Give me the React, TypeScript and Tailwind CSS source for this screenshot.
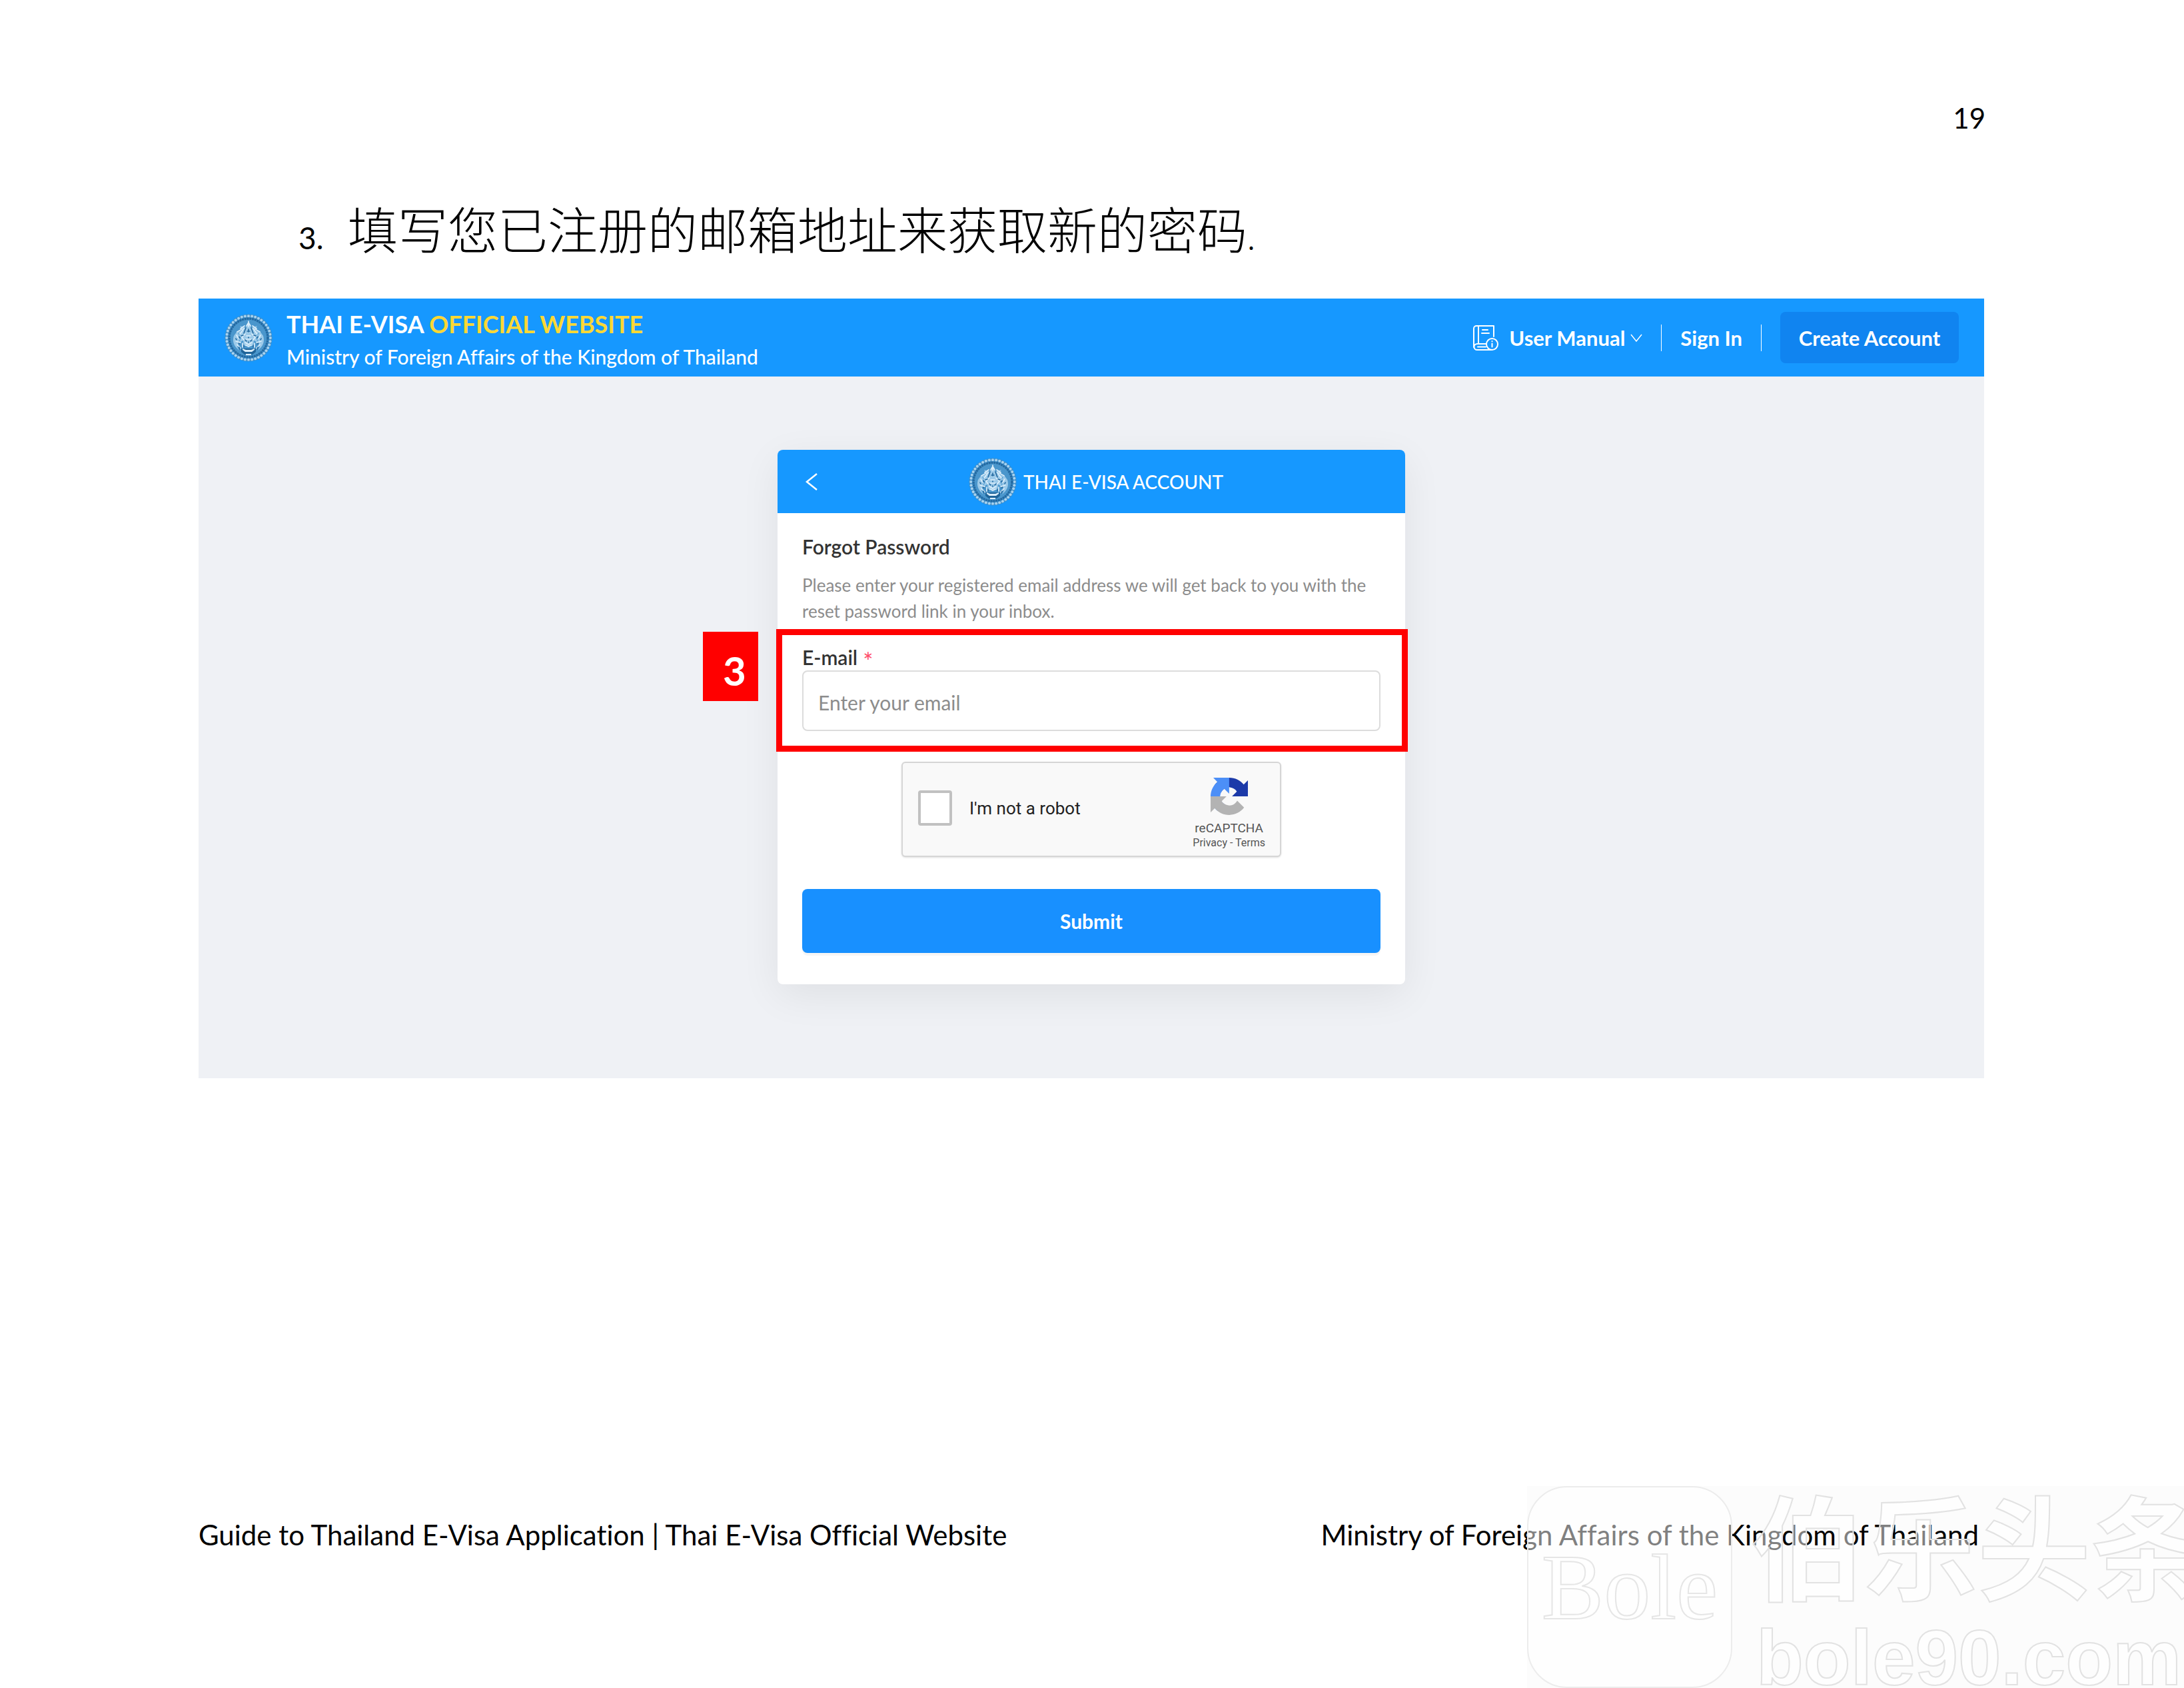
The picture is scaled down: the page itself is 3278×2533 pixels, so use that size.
import { useState } from 'react';

const beads = Array.from({ length: 40 }, (_, i) => (i * 2 * Math.PI) / 40);

// Round ministry seal, shared by the top bar and the card header
function Seal() {
  return (
    <svg viewBox="0 0 72 72" className="size-[72px] shrink-0" aria-hidden="true">
      <circle cx="36" cy="36" r="35.500" fill="#3f8fca" />
      {beads.map((a) => (
        <circle key={a} cx={36 + 32.8 * Math.cos(a)} cy={36 + 32.8 * Math.sin(a)} r="2" fill="#a9d2ee" />
      ))}
      <circle cx="36" cy="36" r="28.800" fill="#4a96cc" stroke="#2369a1" strokeWidth="3.200" strokeDasharray="3 .8" />
      <g fill="#9ccae9">
        <path d="M36 12l4 9 9-3-4 6 8 4-5 2 6 6-7-1 3 8-6-3-1 8h-14l-1-8-6 3 3-8-7 1 6-6-5-2 8-4-4-6 9 3z" />
        <path d="M14 33l5-7 3 6-3 5 4 4-4 8 3 6-5-5c-4-5-5-11-3-17zM58 33l-5-7-3 6 3 5-4 4 4 8-3 6 5-5c4-5 5-11 3-17z" />
      </g>
      <g fill="none" stroke="#dceefa" strokeWidth="1.700" strokeLinecap="round">
        <path d="M36 11v8M33 18l3-5 3 5M24 22l6-4M48 22l-6-4M19 27l7-4M53 27l-7-4" />
        <path d="M29 22c-3 3-3 6-6 8M43 22c3 3 3 6 6 8M31 30l-5 5 3 4M41 30l5 5-3 4" />
        <path d="M18 32c2 2 1 5 4 6M54 32c-2 2-1 5-4 6M17 41c3 0 4 3 7 2M55 41c-3 0-4 3-7 2" />
        <path d="M19 46c1 3 4 2 5 6M53 46c-1 3-4 2-5 6M31 43l5 3 5-3M32 47l4 2 4-2" />
        <path d="M27 44v6M45 44v6M33 33h6M32 38h8" />
      </g>
      <g fill="none" stroke="#22689f" strokeWidth="1.600" strokeLinecap="round">
        <path d="M32 21l-3 8M40 21l3 8M36 23v4M34 26h4M28 32l-3 1M44 32l3 1M36 35v1M33 41l-2-2M39 41l2-2" />
        <path d="M22 34l1 2M50 34l-1 2M21 44l2 1M51 44l-2 1M29 47v3M43 47v3M36 42v1" />
        <path d="M17 37l1 2M55 37l-1 2M22 50l1 3M50 50l-1 3" />
      </g>
      <path d="M25 52h22v5l-5 4H30l-5-4z" fill="#1f6499" />
      <path d="M27 52l5 2h8l5-2v2l-4 3H31l-4-3zM32 60h8v2h-8z" fill="#dceefa" />
    </svg>
  );
}

function ManualIcon() {
  return (
    <svg viewBox="0 0 38 40" className="h-10 w-[38px]" fill="none" stroke="currentColor" strokeWidth="2" strokeLinecap="round" strokeLinejoin="round" aria-hidden="true">
      <path d="M31 18V2H5a4 4 0 0 0-4 4v28M8 2v27M14 8h8M13 13h11" />
      <path d="M20 29H6a4.500 4.500 0 0 0 0 9h21M7 33.500h12" />
      <circle cx="28.500" cy="29.500" r="8.500" />
      <path d="M28.500 28.500v5M28.500 25v.2" />
    </svg>
  );
}

function CaptchaLogo() {
  return (
    <svg viewBox="0 0 64 64" className="size-14" aria-hidden="true">
      <path d="M64 31.955l-.033-1.370V4.687l-7.160 7.160C50.948 4.674 42.033.093 32.050.093c-10.400 0-19.622 4.960-25.458 12.640l11.736 11.860a15.550 15.550 0 0 1 4.754-5.334c2.050-1.600 4.952-2.906 8.968-2.906.485 0 .860.057 1.135.163 4.976.393 9.288 3.140 11.828 7.124l-8.307 8.307L64 31.953" fill="#1c3aa9" />
      <path d="M31.862.094l-1.370.033H4.594l7.160 7.160C4.580 13.147 0 22.060 0 32.046c0 10.400 4.960 19.622 12.640 25.458L24.500 45.768a15.550 15.550 0 0 1-5.334-4.754c-1.600-2.050-2.906-4.952-2.906-8.968 0-.485.057-.860.163-1.135.393-4.976 3.140-9.288 7.124-11.828l8.307 8.307L31.860.095" fill="#4c8ff7" />
      <path d="M.001 32.045l.033 1.370v25.898l7.160-7.160c5.860 7.173 14.774 11.754 24.760 11.754 10.400 0 19.622-4.960 25.458-12.640l-11.736-11.860a15.550 15.550 0 0 1-4.754 5.334c-2.050 1.600-4.952 2.906-8.968 2.906-.485 0-.860-.057-1.135-.163-4.976-.393-9.288-3.140-11.828-7.124l8.307-8.307L0 32.047" fill="#b3b3b3" />
    </svg>
  );
}

function TopBar() {
  return (
    <header className="flex h-[117px] items-center bg-[#1698ff] pr-[38px] pl-[39px] text-white">
      <Seal />
      <div className="ml-[21px] pt-2 whitespace-nowrap">
        <div className="text-[36px] leading-[48px] font-bold">
          THAI E-VISA <span className="text-[#fdd835]">OFFICIAL WEBSITE</span>
        </div>
        <div className="text-[30px] leading-[50px] font-medium">Ministry of Foreign Affairs of the Kingdom of Thailand</div>
      </div>
      <nav className="ml-auto flex items-center text-[31px] leading-10 font-bold whitespace-nowrap">
        <button type="button" className="flex items-center">
          <ManualIcon />
          <span className="ml-4">User Manual</span>
          <svg viewBox="0 0 18 14" className="ml-2 h-[14px] w-[18px]" fill="none" stroke="currentColor" strokeWidth="1.500" aria-hidden="true">
            <path d="M1 2l8 10 8-10" />
          </svg>
        </button>
        <span className="mx-[28px] h-10 w-px bg-white" />
        <a href="#signin">Sign In</a>
        <span className="mx-[28px] h-10 w-px bg-white" />
        <button type="button" className="h-[77px] w-[268px] rounded-lg bg-[#1084f0]">
          Create Account
        </button>
      </nav>
    </header>
  );
}

function Captcha() {
  const [checked, setChecked] = useState(false);

  return (
    <div className="mx-auto mt-[15px] flex h-[143px] w-[570px] items-center rounded-md border-2 border-[#d6d6d6] bg-[#f9f9f9] pr-[22px] pb-1 pl-[23px] font-['Roboto',sans-serif] shadow">
      <input
        id="robot"
        type="checkbox"
        checked={checked}
        onChange={(e) => setChecked(e.target.checked)}
        className="h-[53px] w-[51px] appearance-none rounded-sm border-4 border-[#c1c1c1] bg-white checked:bg-[#4285f4]"
      />
      <label htmlFor="robot" className="ml-[26px] text-[26px] leading-8 text-[#222]">
        I'm not a robot
      </label>
      <div className="ml-auto flex flex-col items-center pt-4 text-[#555]">
        <CaptchaLogo />
        <span className="mt-2 text-[19px] leading-6">reCAPTCHA</span>
        <span className="text-[16px] leading-5">
          <a href="#privacy">Privacy</a> - <a href="#terms">Terms</a>
        </span>
      </div>
    </div>
  );
}

function ForgotPasswordCard() {
  const [email, setEmail] = useState('');

  return (
    <form
      onSubmit={(e) => e.preventDefault()}
      className="mx-auto w-[942px] rounded-lg bg-white px-[37px] pb-[47px] shadow-[0_16px_60px_rgba(0,0,0,0.07)]"
    >
      <div className="-mx-[37px] grid h-[95px] grid-cols-[1fr_auto_1fr] items-center rounded-t-lg bg-[#1698ff] pr-[26px] pl-[40px] text-white">
        <button type="button" aria-label="Back" className="justify-self-start">
          <svg viewBox="0 0 22 30" className="h-[30px] w-[22px]" fill="none" stroke="currentColor" strokeWidth="2.500" aria-hidden="true">
            <path d="M19 3L4 15l15 12" />
          </svg>
        </button>
        <div className="flex items-center gap-[10px] text-[28px] leading-10 font-medium">
          <Seal />
          THAI E-VISA ACCOUNT
        </div>
      </div>

      <h2 className="mt-[30px] text-[30px] leading-10 font-semibold text-[#333]">Forgot Password</h2>
      <p className="mt-[19px] text-[26px] leading-[39px] text-[#8c8c8c]">
        Please enter your registered email address we will get back to you with the reset password link in your inbox.
      </p>

      {/* Highlighted step */}
      <div className="relative -mr-[41px] -ml-[39px] mt-[7px] border-[9px] border-[#ff0000] pt-[14px] pr-[32px] pb-[22px] pl-[30px]">
        <div className="absolute -top-[5px] -left-[119px] flex h-[104px] w-[83px] items-center justify-center bg-[#ff0000] pt-3 pl-3 text-[60px] leading-none font-bold text-white">
          3
        </div>
        <label htmlFor="email" className="flex h-[38px] items-center text-[30px] leading-[38px] font-semibold text-[#333]">
          E-mail <span className="ml-2 pt-3 text-[36px] leading-none font-normal text-[#ff4d6a]">*</span>
        </label>
        <input
          id="email"
          type="email"
          value={email}
          onChange={(e) => setEmail(e.target.value)}
          placeholder="Enter your email"
          className="mt-px block h-[91px] w-full rounded-lg border-2 border-[#dcdcdc] bg-white px-[22px] pt-1 text-[30px] text-[#333] placeholder:text-[#8c8c8c]"
        />
      </div>

      <Captcha />

      <button type="submit" className="mt-[48px] h-24 w-full rounded-lg bg-[#1890ff] text-[30px] font-bold text-white shadow-[0_4px_0_rgba(0,0,0,0.04)]">
        Submit
      </button>
    </form>
  );
}

function Watermark() {
  return (
    <div className="pointer-events-none absolute right-0 bottom-0 flex h-[303px] w-[986px] overflow-hidden bg-black/1 whitespace-nowrap text-white/50">
      <div className="h-full w-[308px] shrink-0 rounded-[60px] border-2 border-[#ececec] bg-white/50 pt-[70px] text-center font-['Liberation_Serif',serif] text-[140px] leading-[160px] [-webkit-text-stroke:2px_#e6e6e6]">
        Bole
      </div>
      <div className="ml-7 [-webkit-text-stroke:2px_#e2e2e2]">
        <div className="font-['Noto_Sans_CJK_SC',sans-serif] text-[170px] leading-[170px] font-bold">伯乐头条</div>
        <div className="ml-2 pt-7 font-['Liberation_Sans',sans-serif] text-[116px] leading-[120px] font-bold">bole90.com</div>
      </div>
    </div>
  );
}

export default function App() {
  return (
    <div className="relative flex min-h-screen flex-col overflow-hidden bg-white pr-[298px] pl-[298px] font-['Lato',sans-serif] text-black [font-variant-ligatures:none]">
      <div className="pt-[149px] text-right text-[42px] leading-[56px]">19</div>
      <h1 className="mt-[87px] flex items-baseline pl-[150px] leading-[100px]">
        <span className="w-[74px] text-[46px]">3.</span>
        <span className="font-['Noto_Sans_CJK_SC',sans-serif] text-[75px] font-light">
          填写您已注册的邮箱地址来获取新的密码<span className="text-[48px]">.</span>
        </span>
      </h1>

      <section className="mt-[41px] mr-[2px] bg-[#eff1f5] pb-[141px]">
        <TopBar />
        <div className="pt-[110px]">
          <ForgotPasswordCard />
        </div>
      </section>

      <footer className="mt-auto flex justify-between pb-[202px] text-[42px] leading-[56px]">
        <span>Guide to Thailand E-Visa Application | Thai E-Visa Official Website</span>
        <span className="mr-[10px]">Ministry of Foreign Affairs of the Kingdom of Thailand</span>
      </footer>

      <Watermark />
    </div>
  );
}
